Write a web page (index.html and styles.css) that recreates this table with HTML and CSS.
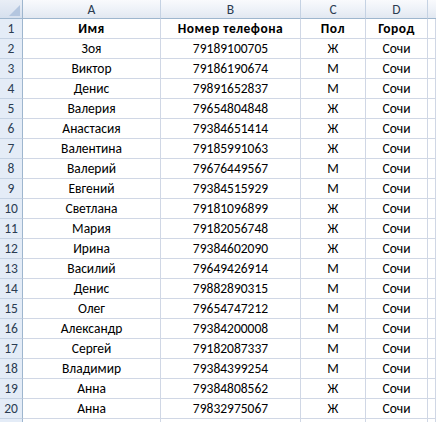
FILE: index.html
```html
<!DOCTYPE html>
<html lang="ru">
<head>
<meta charset="utf-8">
<title>Sheet</title>
<link rel="stylesheet" href="styles.css">
</head>
<body>
<div class="sheet">
  <div class="corner"><span class="tri"></span></div>
  <div class="ch">A</div><div class="ch">B</div><div class="ch">C</div><div class="ch">D</div><div class="ch last"></div>

  <div class="rh">1</div><div class="c b">Имя</div><div class="c b">Номер телефона</div><div class="c b">Пол</div><div class="c b">Город</div><div class="c"></div>
  <div class="rh">2</div><div class="c">Зоя</div><div class="c">79189100705</div><div class="c">Ж</div><div class="c">Сочи</div><div class="c"></div>
  <div class="rh">3</div><div class="c">Виктор</div><div class="c">79186190674</div><div class="c">М</div><div class="c">Сочи</div><div class="c"></div>
  <div class="rh">4</div><div class="c">Денис</div><div class="c">79891652837</div><div class="c">М</div><div class="c">Сочи</div><div class="c"></div>
  <div class="rh">5</div><div class="c">Валерия</div><div class="c">79654804848</div><div class="c">Ж</div><div class="c">Сочи</div><div class="c"></div>
  <div class="rh">6</div><div class="c">Анастасия</div><div class="c">79384651414</div><div class="c">Ж</div><div class="c">Сочи</div><div class="c"></div>
  <div class="rh">7</div><div class="c">Валентина</div><div class="c">79185991063</div><div class="c">Ж</div><div class="c">Сочи</div><div class="c"></div>
  <div class="rh">8</div><div class="c">Валерий</div><div class="c">79676449567</div><div class="c">М</div><div class="c">Сочи</div><div class="c"></div>
  <div class="rh">9</div><div class="c">Евгений</div><div class="c">79384515929</div><div class="c">М</div><div class="c">Сочи</div><div class="c"></div>
  <div class="rh">10</div><div class="c">Светлана</div><div class="c">79181096899</div><div class="c">Ж</div><div class="c">Сочи</div><div class="c"></div>
  <div class="rh">11</div><div class="c">Мария</div><div class="c">79182056748</div><div class="c">Ж</div><div class="c">Сочи</div><div class="c"></div>
  <div class="rh">12</div><div class="c">Ирина</div><div class="c">79384602090</div><div class="c">Ж</div><div class="c">Сочи</div><div class="c"></div>
  <div class="rh">13</div><div class="c">Василий</div><div class="c">79649426914</div><div class="c">М</div><div class="c">Сочи</div><div class="c"></div>
  <div class="rh">14</div><div class="c">Денис</div><div class="c">79882890315</div><div class="c">М</div><div class="c">Сочи</div><div class="c"></div>
  <div class="rh">15</div><div class="c">Олег</div><div class="c">79654747212</div><div class="c">М</div><div class="c">Сочи</div><div class="c"></div>
  <div class="rh">16</div><div class="c">Александр</div><div class="c">79384200008</div><div class="c">М</div><div class="c">Сочи</div><div class="c"></div>
  <div class="rh">17</div><div class="c">Сергей</div><div class="c">79182087337</div><div class="c">М</div><div class="c">Сочи</div><div class="c"></div>
  <div class="rh">18</div><div class="c">Владимир</div><div class="c">79384399254</div><div class="c">М</div><div class="c">Сочи</div><div class="c"></div>
  <div class="rh">19</div><div class="c">Анна</div><div class="c">79384808562</div><div class="c">Ж</div><div class="c">Сочи</div><div class="c"></div>
  <div class="rh">20</div><div class="c">Анна</div><div class="c">79832975067</div><div class="c">Ж</div><div class="c">Сочи</div><div class="c"></div>
  <div class="rh"></div><div class="c"></div><div class="c"></div><div class="c"></div><div class="c"></div><div class="c"></div>
</div>
</body>
</html>
```
FILE: styles.css
```css
html, body {
  margin: 0;
  padding: 0;
  background: #ffffff;
}
.sheet {
  display: grid;
  grid-template-columns: 23px 138px 140px 65px 62px 1fr;
  grid-template-rows: 19px repeat(21, 20px);
  width: 436px;
  height: 422px;
  overflow: hidden;
  font-family: Calibri, Carlito, Lato, "Noto Sans", sans-serif;
  font-size: 13.5px;
  color: #000;
}
.sheet > div {
  box-sizing: border-box;
  display: flex;
  align-items: center;
  justify-content: center;
  white-space: nowrap;
  overflow: hidden;
}
.corner {
  position: relative;
  background: linear-gradient(#e9eef6, #d6e0ee);
  border-right: 1px solid #9eb6ce;
  border-bottom: 1px solid #9eb6ce;
}
.corner .tri {
  position: absolute;
  right: 2px;
  bottom: 2px;
  width: 0;
  height: 0;
  border-left: 11px solid transparent;
  border-bottom: 11px solid #b4c6df;
}
.ch {
  background: linear-gradient(#f9fafd 0%, #eef2f8 50%, #e2e8f1 100%);
  border-right: 1px solid #c5d2e3;
  border-bottom: 1px solid #9eb6ce;
  color: #2b3c52;
  padding-top: 1px;
}
.ch.last {
  border-right: none;
}
.rh {
  background: #e4ecf7;
  border-right: 1px solid #9eb6ce;
  border-bottom: 1px solid #c5d2e3;
  color: #2b3c52;
}
.c {
  border-right: 1px solid #d0d7e5;
  border-bottom: 1px solid #d0d7e5;
}
.c.b {
  font-weight: bold;
  letter-spacing: 0.5px;
}
```
